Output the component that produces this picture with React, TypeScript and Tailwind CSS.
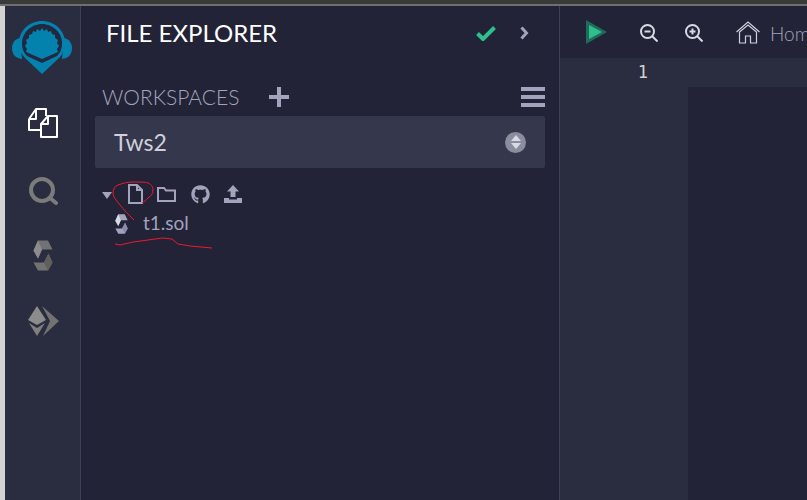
import { FaGithub } from 'react-icons/fa';

function Logo() {
  return (
    <svg width="60" height="53" viewBox="0 0 60 53" className="block">
      <path d="M8 17 C3 18 0 22 0 27 C0 33 3 37 10 38 Z" fill="#0482ae" />
      <path d="M52 17 C57 18 60 22 60 27 C60 33 57 37 50 38 Z" fill="#0482ae" />
      <path d="M30 0 C17 0 7 10 7 22 C7 28 9 33 13 37 L30 53 L47 37 C51 33 53 28 53 22 C53 10 43 0 30 0 Z" fill="#0482ae" />
      <path d="M30 3 C19 3 10 12 10 22 C10 28 12 32 15 35 L30 42 L45 35 C48 32 50 28 50 22 C50 12 41 3 30 3 Z" fill="#22283f" />
      <path d="M30 7 L32 10 L35 8 L36 11 L39 10 L40 13 L43 14 L43 17 L46 19 L45 22 L47 25 L45 28 L46 31 L30 38 L14 31 L15 28 L13 25 L15 22 L14 19 L17 17 L17 14 L20 13 L21 10 L24 11 L25 8 L28 10 Z" fill="#0482ae" />
    </svg>
  );
}

function FilesIcon() {
  return (
    <svg width="30" height="30" viewBox="0 0 30 30" fill="none" stroke="#fff" strokeWidth="2" strokeLinejoin="round" className="block">
      <path d="M1 11 L8 1 H18 V8" />
      <path d="M1 11 V22 H12" />
      <path d="M8 1 V11 H1" />
      <path d="M13 16 L20 8 H29 V29 H13 Z" />
      <path d="M20 8 V16 H13" />
    </svg>
  );
}

function SearchIcon() {
  return (
    <svg width="30" height="28" viewBox="0 0 30 28" fill="none" stroke="#7b7b7b" strokeWidth="4" strokeLinecap="round" className="block">
      <circle cx="13" cy="13" r="11" />
      <path d="M21 21 L27 26" />
    </svg>
  );
}

function SolidityIcon({ size, light }: { size: number; light?: boolean }) {
  const a = light ? '#d8d9e6' : '#8c8c8c';
  const b = light ? '#a2a3bd' : '#727272';
  const c = light ? '#8a8ba6' : '#5f5f5f';
  return (
    <svg width={size} height={size * 1.55} viewBox="0 0 20 30" className="block">
      <path d="M5 0 H15 L19.5 9 H9 L5 18 L0.5 10 Z" fill={b} />
      <path d="M5 0 L9 9 L5 18 L0.5 10 Z" fill={a} />
      <path d="M0.5 22 H11 L15.5 13 L19.5 22 L15 30 H5 Z" fill={b} />
      <path d="M15.5 13 L19.5 22 L15 30 L11 22 Z" fill={c} />
    </svg>
  );
}

function EthIcon() {
  return (
    <svg width="31" height="32" viewBox="0 0 31 32" className="block">
      <path d="M9 1 L0 15 L9 20 L18 15 Z" fill="#8c8c8c" />
      <path d="M1 18 L9 31 L17 18 L9 23 Z" fill="#7f7f7f" />
      <path d="M14 1 L31 16 L15 31 L22 16 Z" fill="#727272" />
    </svg>
  );
}

function Annotations() {
  return (
    <svg className="absolute left-0 top-0 pointer-events-none" width="807" height="500" fill="none" stroke="#f0182c" strokeWidth="1">
      <path d="M134 220 C128 214 124 210 120 205 C116 200 113 197 113 193 C113 189 115 186 118 185 C123 183 128 182 133 182 C140 182 145 182 148 183 C152 185 153 187 153 190 C153 194 151 196 148 198 C146 200 144 202 142 203" />
      <path d="M115 244 L120 245 L133 242 L148 240 L162 238 L172 239 L178 244 L190 246 L212 248" />
    </svg>
  );
}

export default function App() {
  return (
    <div className="relative w-[807px] h-[500px] overflow-hidden bg-[#222336] font-['Lato',sans-serif]">
      <div className="h-[4px] bg-[#3a3a3a]" />
      <div className="h-[2px] bg-[#6f6f6f]" />
      <div className="flex h-[494px]">
        <div className="w-[5px] bg-[#d2d2d2]" />

        <div className="w-[76px] bg-[#2a2c3f] border-r border-[#3e4159] flex flex-col items-start pt-[15px]">
          <div className="ml-[7px]"><Logo /></div>
          <div className="ml-[23px] mt-[34px]"><FilesIcon /></div>
          <div className="ml-[24px] mt-[39px]"><SearchIcon /></div>
          <div className="ml-[28px] mt-[35px]"><SolidityIcon size={20} /></div>
          <div className="ml-[23px] mt-[34px]"><EthIcon /></div>
        </div>

        <div className="w-[479px] border-r border-[#3e4159] flex flex-col">
          <div className="flex items-center justify-between pl-[25px] pr-[30px] pt-[8px] h-[46px] shrink-0">
            <span className="text-[24px] leading-none text-white">FILE EXPLORER</span>
            <div className="flex items-center gap-[24px]">
              <svg width="20" height="15" viewBox="0 0 20 15" fill="none" stroke="#2fbf8f" strokeWidth="4">
                <path d="M1.5 7.5 L7 13 L18.5 1.5" />
              </svg>
              <svg width="9" height="14" viewBox="0 0 9 14" fill="none" stroke="#a2a3bd" strokeWidth="3">
                <path d="M1.5 1.5 L6.5 7 L1.5 12.5" />
              </svg>
            </div>
          </div>

          <div className="flex items-center justify-between pl-[21px] pr-[14px] mt-[33px] h-[24px] shrink-0">
            <div className="flex items-center gap-[30px]">
              <span className="text-[21px] font-light leading-none text-[#a2a3bd] -mt-[2px]">WORKSPACES</span>
              <svg width="20" height="20" viewBox="0 0 20 20" fill="#a2a3bd">
                <path d="M8 0 H12 V8 H20 V12 H12 V20 H8 V12 H0 V8 H8 Z" />
              </svg>
            </div>
            <div className="w-[24px] flex flex-col gap-[4px]">
              <div className="h-[4px] bg-[#a2a3bd]" />
              <div className="h-[4px] bg-[#a2a3bd]" />
              <div className="h-[4px] bg-[#a2a3bd]" />
            </div>
          </div>

          <div className="mt-[7px] ml-[14px] w-[450px] h-[52px] shrink-0 rounded-[2px] bg-[#35384c] flex items-center justify-between pl-[19px] pr-[19px]">
            <span className="text-[23px] leading-none text-[#cfd0de]">Tws2</span>
            <div className="w-[21px] h-[21px] rounded-full bg-[#8b8d9f] flex flex-col items-center justify-center gap-[2px]">
              <div className="w-0 h-0 border-x-[5px] border-x-transparent border-b-[6px] border-b-[#d8d9e6]" />
              <div className="w-0 h-0 border-x-[5px] border-x-transparent border-t-[6px] border-t-[#d8d9e6]" />
            </div>
          </div>

          <div className="flex items-center ml-[21px] mt-[15px] h-[22px] shrink-0 text-[#a2a3bd]">
            <div className="w-0 h-0 mt-[3px] border-x-[5.5px] border-x-transparent border-t-[7px] border-t-[#a2a3bd]" />
            <svg className="ml-[16px]" width="15" height="20" viewBox="0 0 15 20" fill="none" stroke="#a2a3bd" strokeWidth="2">
              <path d="M1 1 H9 L14 6 V19 H1 Z" />
              <path d="M9 1 V6 H14" />
            </svg>
            <svg className="ml-[14px]" width="19" height="15" viewBox="0 0 19 15" fill="none" stroke="#a2a3bd" strokeWidth="2">
              <path d="M1 14 V1 H7 L9 3.5 H18 V14 Z" />
            </svg>
            <FaGithub className="ml-[15px]" size={19} color="#a2a3bd" />
            <svg className="ml-[14px]" width="18" height="18" viewBox="0 0 18 18" fill="#a2a3bd">
              <path d="M9 0 L15 6.5 H11.5 V12 H6.5 V6.5 H3 Z" />
              <path d="M0 13 H5 V14.5 H13 V13 H18 V18 H0 Z" />
            </svg>
          </div>

          <div className="flex items-center ml-[34px] mt-[5px] h-[28px] shrink-0">
            <SolidityIcon size={13} light />
            <span className="ml-[15px] -mt-[3px] text-[19px] leading-none text-[#a2a3bd]">t1.sol</span>
          </div>
        </div>

        <div className="flex-1 flex flex-col min-w-0">
          <div className="h-[52px] flex items-center pl-[26px] overflow-hidden shrink-0">
            <svg className="shrink-0" width="21" height="24" viewBox="0 0 21 24">
              <path d="M0 0 L21 12 L0 24 Z" fill="#1f6b5c" />
              <path d="M3 5 L16 12 L3 19 Z" fill="#2fbf8f" />
            </svg>
            <svg className="ml-[33px] mt-[2px] shrink-0" width="18" height="18" viewBox="0 0 18 18" fill="none" stroke="#d8d9e6" strokeWidth="2">
              <circle cx="7.5" cy="7.5" r="6.5" />
              <path d="M12 12 L17.5 17.5 M4.5 7.5 H10.5" />
            </svg>
            <svg className="ml-[27px] mt-[2px] shrink-0" width="18" height="18" viewBox="0 0 18 18" fill="none" stroke="#d8d9e6" strokeWidth="2">
              <circle cx="7.5" cy="7.5" r="6.5" />
              <path d="M12 12 L17.5 17.5 M4.5 7.5 H10.5 M7.5 4.5 V10.5" />
            </svg>
            <svg className="ml-[33px] shrink-0" width="24" height="23" viewBox="0 0 24 23" fill="none" stroke="#cfd0de" strokeWidth="1.2">
              <path d="M0.5 11 L12 1 L23.5 11" />
              <path d="M3.5 11 L12 4 L20.5 11 V22 H14.5 V15 H9.5 V22 H3.5 Z" />
            </svg>
            <span className="ml-[10px] mt-[2px] shrink-0 text-[19px] font-light leading-none text-[#a2a3bd]">Home</span>
          </div>
          <div className="flex-1 flex min-h-0 flex-col">
            <div className="h-[29px] bg-[#2a2c3f] shrink-0 flex">
              <div className="w-[88px] pt-[4px] text-right font-['DejaVu_Sans_Mono',monospace] text-[17px] leading-[20px] text-[#d2d2d2]">1</div>
            </div>
            <div className="flex-1 flex">
              <div className="w-[128px] bg-[#2a2c3f]" />
              <div className="flex-1 bg-[#222336]" />
            </div>
          </div>
        </div>
      </div>
      <Annotations />
    </div>
  );
}
